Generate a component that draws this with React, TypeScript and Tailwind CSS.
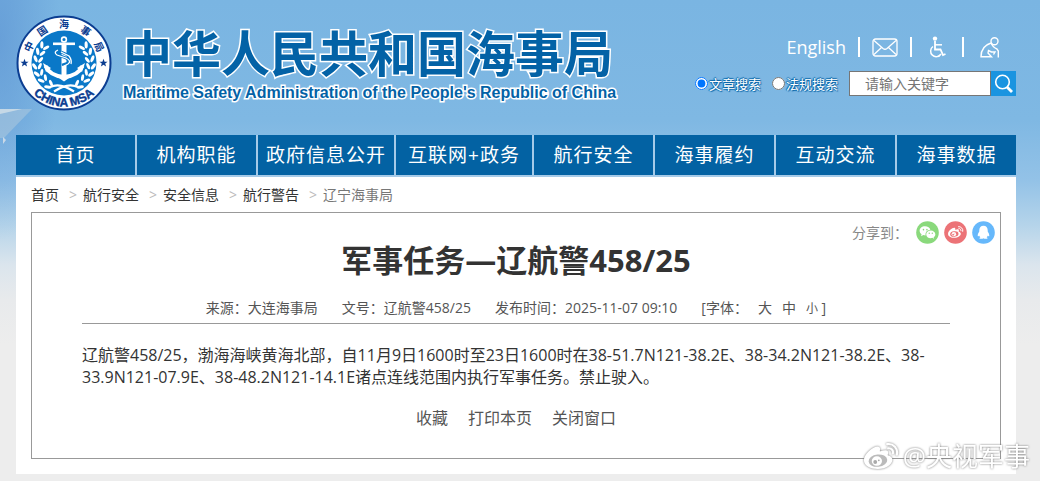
import { useState } from 'react'

const navItems = [
  '首页',
  '机构职能',
  '政府信息公开',
  '互联网+政务',
  '航行安全',
  '海事履约',
  '互动交流',
  '海事数据',
]

const crumbs = ['首页', '航行安全', '安全信息', '航行警告']

const searchTypes = [
  { id: 'article', label: '文章搜索' },
  { id: 'law', label: '法规搜索' },
]

// characters on the upper ring of the emblem, by angle from the top
const ringChars = [
  { char: '中', angle: -65 },
  { char: '国', angle: -34 },
  { char: '海', angle: 0 },
  { char: '事', angle: 34 },
  { char: '局', angle: 65 },
]

// x, y and tilt of each leaf pair
const leaves = [
  [27, 31, 30],
  [23, 37, 20],
  [21, 44, 8],
  [20, 51, -6],
  [22, 58, -22],
  [26, 64, -38],
  [32, 70, -54],
]

function Laurel() {
  return (
    <g fill="#fff">
      {leaves.map(([x, y, r]) => (
        <g key={y} transform={`translate(${x + 1} ${y}) rotate(${r})`}>
          <ellipse cx="-2.2" cy="-1" rx="1.6" ry="3.6" transform="rotate(-28)" />
          <ellipse cx="2.6" cy="-1" rx="1.5" ry="3.4" transform="rotate(30)" />
        </g>
      ))}
    </g>
  )
}

function Emblem() {
  const star = 'M0 -4.2 L1.1 -1.3 L4.1 -1.3 L1.7 0.6 L2.6 3.5 L0 1.8 L-2.6 3.5 L-1.7 0.6 L-4.1 -1.3 L-1.1 -1.3 Z'
  return (
    <svg viewBox="0 0 96 96" className="size-24 shrink-0" role="img" aria-label="中国海事局 CHINA MSA">
      <defs>
        <path id="ring-bottom" d="M4.5 48 A43.5 43.5 0 0 0 91.5 48" />
      </defs>
      <circle cx="48" cy="48" r="46.5" fill="#fff" stroke="#0b3d91" strokeWidth="2" />
      <circle cx="48" cy="48" r="32.5" fill="#0a78c8" />
      <g fill="#0b3d91" fontSize="10" fontWeight="700" textAnchor="middle" fontFamily="'Noto Sans CJK SC', sans-serif">
        {ringChars.map(({ char, angle }) => (
          <text key={char} x="48" y="13" transform={`rotate(${angle} 48 48)`}>
            {char}
          </text>
        ))}
      </g>
      <text fill="#0b3d91" stroke="#0b3d91" strokeWidth="0.4" fontSize="12" fontWeight="700" textAnchor="middle" fontFamily="'Liberation Sans', sans-serif">
        <textPath href="#ring-bottom" startOffset="50%">CHINA MSA</textPath>
      </text>
      <path d={star} fill="#0b3d91" transform="translate(8.5 48)" />
      <path d={star} fill="#0b3d91" transform="translate(87.5 48)" />
      <Laurel />
      <g transform="translate(96 0) scale(-1 1)">
        <Laurel />
      </g>
      {/* anchor */}
      <g fill="none" stroke="#fff">
        <circle cx="48" cy="24.5" r="2.4" strokeWidth="1.6" />
        <path d="M37 28.8 H59" strokeWidth="2.6" />
        <path d="M48 28 V60" strokeWidth="5" />
        <path d="M29.5 51 Q34 61 48 62 Q62 61 66.5 51" strokeWidth="4" />
      </g>
      <path d="M27 48 L35 53 L30 57 Z M69 48 L61 53 L66 57 Z M40 61 H56 L48 66.5 Z" fill="#fff" />
      <path d="M43 35 q-5 2 -1 5 l8 3 q5 3 2 5 l-6 2 M45 37 l9 4 q3 3 0 6 l3 4" fill="none" stroke="#0a78c8" strokeWidth="2.8" />
      <path d="M42 35 q-5 2 -1 5 l9 3 q6 3 2 6 l-6 3 M45 37 l8 4 q3 4 2 8" fill="none" stroke="#fff" strokeWidth="1.3" />
      <path d="M34 72 Q44 67 58 76.5 M62 72 Q52 67 38 76.5" fill="none" stroke="#fff" strokeWidth="2.2" />
    </svg>
  )
}

function MailIcon() {
  return (
    <svg viewBox="0 0 26 19" className="h-[19px] w-[26px]" fill="none" stroke="#fff" strokeWidth="1.3" aria-hidden="true">
      <rect x="1" y="1" width="24" height="17" rx="2.5" />
      <path d="M2 2.5 L11 10.5 Q13 12 15 10.5 L24 2.5 M2 16.5 L9.5 9.5 M24 16.5 L16.5 9.5" />
    </svg>
  )
}

function WheelchairIcon() {
  return (
    <svg viewBox="0 0 18 23" className="h-[23px] w-[18px]" fill="none" stroke="#fff" strokeWidth="1.8" aria-hidden="true">
      <circle cx="7" cy="2.6" r="2.2" fill="#fff" stroke="none" />
      <path d="M7 5 V13.5 H12.5 L15 19 L17.5 18" />
      <path d="M7 8.8 H14" strokeWidth="1.5" />
      <path d="M5 10.5 A5.6 5.6 0 1 0 13 18" strokeWidth="1.5" />
    </svg>
  )
}

function ElderIcon() {
  return (
    <svg viewBox="0 0 20 21" className="h-[21px] w-5" fill="none" stroke="#fff" strokeWidth="1.4" aria-hidden="true">
      <circle cx="14.5" cy="4.2" r="3.5" />
      <path d="M11 6 Q1 9 1 19.8 H11.5 L8 16 L8.5 13.5 L11.5 15 H15 L13.5 17.5 M11 6 Q13 10.5 17 12 L18.3 14 V20.5" />
    </svg>
  )
}

function SearchIcon() {
  return (
    <svg viewBox="0 0 20 20" className="size-5" fill="none" stroke="#fff" aria-hidden="true">
      <circle cx="8.5" cy="8" r="6.8" strokeWidth="1.6" />
      <path d="M13 13 L18 18" strokeWidth="2.8" />
    </svg>
  )
}

function WechatIcon() {
  return (
    <svg viewBox="0 0 24 24" className="size-[23px]" aria-hidden="true">
      <circle cx="12" cy="12" r="11.8" fill="#8ad97c" />
      <path d="M9.5 5.5 C6 5.5 3.8 7.6 3.8 10.2 C3.8 11.8 4.6 13 5.8 13.9 L5.3 15.8 L7.6 14.7 L10 15 C9.6 11.5 12 9.3 15 9.2 C14.4 7 12.3 5.5 9.5 5.5 Z" fill="#fff" />
      <path d="M15.4 10 C12.6 10 10.7 11.8 10.7 14 C10.7 16.2 12.7 17.9 15.4 17.9 L17 17.6 L18.8 18.6 L18.4 17 C19.5 16.3 20.2 15.2 20.2 14 C20.2 11.8 18 10 15.4 10 Z" fill="#fff" />
      <g fill="#8ad97c">
        <circle cx="7.8" cy="9" r="0.8" />
        <circle cx="11.4" cy="9" r="0.8" />
        <circle cx="13.8" cy="12.8" r="0.7" />
        <circle cx="17" cy="12.8" r="0.7" />
      </g>
    </svg>
  )
}

function WeiboMark({ hole, pupil }: { hole: string; pupil: string }) {
  return (
    <>
      <path
        d="M17.7 11.6 C17.3 11.5 17.1 11.4 17.3 10.9 C17.7 9.8 17.7 8.9 17.3 8.3 C16.5 7.1 14.2 7.2 11.7 8.3 C11.7 8.3 10.9 8.6 11.1 8 C11.5 6.8 11.4 5.7 10.8 5.1 C9.4 3.7 5.7 5.2 2.5 8.4 C0.1 10.7 -1.3 13.3 -1.3 15.4 C-1.3 19.6 4.1 22.2 9.4 22.2 C16.3 22.2 20.9 18.2 20.9 15 C20.9 13.1 19.3 12 17.7 11.6"
        fill="currentColor"
      />
      <ellipse cx="9.6" cy="15.6" rx="7.3" ry="4.8" fill={hole} transform="rotate(-6 9.6 15.6)" />
      <path d="M16.8 2.8 A6.6 6.6 0 0 1 24.3 11 M17.6 6 A3.2 3.2 0 0 1 21.2 10" fill="none" stroke="currentColor" strokeWidth="1.7" strokeLinecap="round" />
      <ellipse cx="8.8" cy="15.9" rx="4" ry="3.7" fill="currentColor" />
      <circle cx="7.5" cy="16.7" r="1.5" fill={pupil} />
      <circle cx="10.3" cy="15.4" r="0.7" fill={pupil} />
    </>
  )
}

function WeiboIcon() {
  return (
    <svg viewBox="0 0 24 24" className="size-[23px] text-white" aria-hidden="true">
      <circle cx="12" cy="12" r="11.8" fill="#ec7377" />
      <g transform="translate(5 4.2) scale(0.6)">
        <WeiboMark hole="#ec7377" pupil="#ec7377" />
      </g>
    </svg>
  )
}

function QqIcon() {
  return (
    <svg viewBox="0 0 24 24" className="size-[23px]" aria-hidden="true">
      <circle cx="12" cy="12" r="11.8" fill="#66b8fb" />
      <path d="M12 5 C9.2 5 7.6 7 7.6 9.6 L7.6 11 C6.5 12.6 5.8 14.3 6 15.6 C6.2 16.3 6.8 15.8 7.4 15 C7.6 15.8 8.2 16.4 8.8 16.9 C7.2 17.5 7.5 18.6 9.2 18.6 C10.7 18.6 11.6 18.3 12 18 C12.4 18.3 13.3 18.6 14.8 18.6 C16.5 18.6 16.8 17.5 15.2 16.9 C15.8 16.4 16.4 15.8 16.6 15 C17.2 15.8 17.8 16.3 18 15.6 C18.2 14.3 17.5 12.6 16.4 11 L16.4 9.6 C16.4 7 14.8 5 12 5 Z" fill="#fff" />
    </svg>
  )
}

// tip of the aircraft wing at the left edge of the banner
function Wing() {
  return (
    <svg viewBox="0 0 60 60" className="absolute top-[95px] left-0 size-[60px]" aria-hidden="true">
      <path d="M0 14 L32 14 L4 43 L0 43 Z" fill="#a9c6de" opacity="0.6" />
      <path d="M0 14 L22 14 L0 19 Z" fill="#dbe5ea" opacity="0.7" />
      <path d="M3 42 L6 45 L3 49 Z" fill="#c9d9e8" />
    </svg>
  )
}

function Divider() {
  return <span className="h-5 w-0.5 bg-white" />
}

function Header() {
  const [type, setType] = useState('article')

  return (
    <header className="relative flex items-start justify-between pt-[15px] pb-6">
      <a href="#" className="flex items-start gap-[11px]">
        <Emblem />
        <span className="flex flex-col pt-[9px] text-[#0362a6] [paint-order:stroke] [-webkit-text-stroke:3px_white]">
          <span className="text-[49px] leading-[59px] font-bold whitespace-nowrap">中华人民共和国海事局</span>
          <span className="font-['Liberation_Sans',sans-serif] text-base leading-5 font-bold whitespace-nowrap">
            Maritime Safety Administration of the People's Republic of China
          </span>
        </span>
      </a>

      <div className="flex flex-col items-end gap-3 pt-5">
        <div className="flex items-center gap-3 pr-4 text-white">
          <a href="#" className="text-lg leading-6">English</a>
          <Divider />
          <a href="#" aria-label="邮箱"><MailIcon /></a>
          <Divider />
          <a href="#" aria-label="无障碍" className="px-1"><WheelchairIcon /></a>
          <Divider />
          <a href="#" aria-label="长者模式" className="pl-1"><ElderIcon /></a>
        </div>
        <form className="flex items-center" onSubmit={(e) => e.preventDefault()}>
          {searchTypes.map(({ id, label }) => (
            <label
              key={id}
              className="mr-[11px] flex items-center text-[13px] leading-5 text-white [text-shadow:1px_1px_1px_#0362a6,-1px_0_1px_#0362a6,0_-1px_1px_#0362a6]"
            >
              <input
                type="radio"
                name="search-type"
                className="mr-px size-[13px]"
                checked={type === id}
                onChange={() => setType(id)}
              />
              {label}
            </label>
          ))}
          <input
            type="text"
            aria-label="关键字"
            placeholder="请输入关键字"
            className="h-[25px] w-[142px] border border-[#767676] bg-white px-[15px] text-sm text-[#333] placeholder:text-[#757575]"
          />
          <button type="submit" aria-label="搜索" className="flex h-[25px] w-[25px] items-center justify-center bg-[#1a94e0]">
            <SearchIcon />
          </button>
        </form>
      </div>
    </header>
  )
}

function Article() {
  return (
    <article className="border border-[#999] pb-7">
      <div className="flex items-center justify-end pt-2 pr-[5px] text-sm text-[#888]">
        <span className="mr-2">分享到：</span>
        <span className="flex gap-[5px]">
          <button type="button" aria-label="微信"><WechatIcon /></button>
          <button type="button" aria-label="微博"><WeiboIcon /></button>
          <button type="button" aria-label="QQ"><QqIcon /></button>
        </span>
      </div>
      <div className="px-[50px]">
        <h1 className="text-center text-[31px] leading-8 font-bold text-[#333]">军事任务—辽航警458/25</h1>
        <div className="mt-5 flex justify-center gap-6 border-b border-[#999] pb-[3px] text-sm leading-6 text-[#555]">
          <span>来源：大连海事局</span>
          <span>文号：辽航警458/25</span>
          <span>发布时间：2025-11-07 09:10</span>
          <span className="flex gap-2.5">
            [字体：
            <button type="button">大</button>
            <button type="button">中</button>
            <span>
              <button type="button" className="text-xs">小</button> ]
            </span>
          </span>
        </div>
        <p className="mt-5 text-base leading-[22px] text-[#333]">
          辽航警458/25，渤海海峡黄海北部，自11月9日1600时至23日1600时在38-51.7N121-38.2E、38-34.2N121-38.2E、38-33.9N121-07.9E、38-48.2N121-14.1E诸点连线范围内执行军事任务。禁止驶入。
        </p>
        <div className="mt-[18px] flex justify-center gap-5 text-base leading-6 text-[#555]">
          <button type="button">收藏</button>
          <button type="button">打印本页</button>
          <button type="button">关闭窗口</button>
        </div>
      </div>
    </article>
  )
}

export default function App() {
  return (
    <div className="relative min-h-screen bg-[#ededed] bg-[radial-gradient(60px_200px_at_0px_40px,rgba(95,150,212,0.7),rgba(122,181,226,0)),linear-gradient(#7ab5e2_0px,#7fb8e3_120px,#93c2e7_180px,#b5d4ea_225px,#dbe5ed_265px,#e8eaec_300px,#ededed_345px)] pr-6 pb-2 pl-4 font-['Open_Sans','Noto_Sans_CJK_SC',sans-serif]">
      <Wing />
      <Header />
      <nav className="relative grid grid-cols-[119fr_119fr_136fr_136fr_119fr_119fr_119fr_119fr] gap-0.5 border-b-2 border-[#a5cae8] bg-[#a5cae8]">
        {navItems.map((item) => (
          <a key={item} href="#" className="bg-[#0362a3] text-center text-[19px] leading-10 tracking-[1px] whitespace-nowrap text-white">
            {item}
          </a>
        ))}
      </nav>
      <main className="bg-white px-[15px] pb-[15px]">
        <div className="flex items-center py-2 text-sm leading-[19px] text-[#333]">
          {crumbs.map((crumb) => (
            <span key={crumb} className="flex">
              <a href="#">{crumb}</a>
              <span className="mr-1.5 ml-2.5 text-[#bbb]">&gt;</span>
            </span>
          ))}
          <span className="text-[#777]">辽宁海事局</span>
        </div>
        <Article />
      </main>

      {/* watermark */}
      <div className="absolute right-2.5 bottom-2.5 flex items-center gap-1 text-[26px] leading-8 text-white [filter:drop-shadow(0_0_1px_#777)]">
        <svg viewBox="-2 0 28 24" className="h-8 w-9" aria-hidden="true">
          <WeiboMark hole="#bbb" pupil="#aaa" />
        </svg>
        @央视军事
      </div>
    </div>
  )
}
